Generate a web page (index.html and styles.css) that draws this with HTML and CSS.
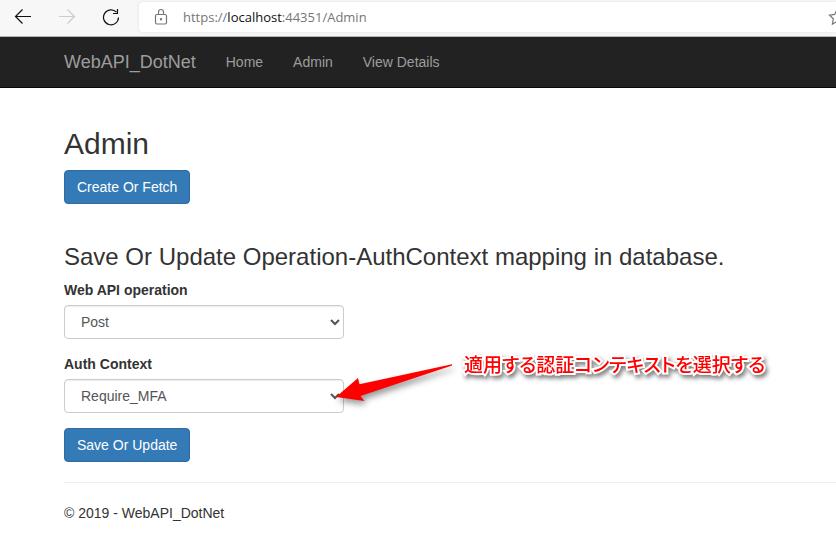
FILE: index.html
```html
<!DOCTYPE html>
<html lang="en">
<head>
<meta charset="utf-8">
<title>Admin - WebAPI_DotNet</title>
<link rel="stylesheet" href="styles.css">
</head>
<body>
<div class="toolbar">
  <div class="tools">
    <button class="tool" type="button" aria-label="Back">
      <svg width="18" height="18" viewBox="0 0 18 18"><path d="M17 8.500H1.500M8.500 1.500L1.500 8.500l7 7"/></svg>
    </button>
    <button class="tool" type="button" aria-label="Forward" disabled>
      <svg width="18" height="18" viewBox="0 0 18 18"><path d="M1 8.500h15.500M9.500 1.500l7 7-7 7"/></svg>
    </button>
    <button class="tool" type="button" aria-label="Refresh">
      <svg width="18" height="18" viewBox="0 0 18 18"><path d="M16.500 9.500A7.500 7.500 0 1 1 14.500 4.200M15.500 1v4.500H11"/></svg>
    </button>
  </div>
  <div class="address">
    <svg class="lock" width="14" height="18" viewBox="0 0 14 18"><rect x="1.500" y="6.500" width="11" height="9.500" rx="1.500"/><path d="M4.500 6.500V4a2.500 2.500 0 0 1 5 0v2.500"/><circle cx="7" cy="11.300" r=".6"/></svg>
    <span class="url">https://<span class="host">localhost</span>:44351/Admin</span>
    <svg class="star" width="18" height="18" viewBox="0 0 18 18"><path d="M9 1.500l2.300 4.900 5.200.7-3.800 3.700.9 5.300L9 13.600l-4.600 2.500.9-5.300L1.500 7.100l5.200-.7z"/></svg>
  </div>
</div>
<nav class="navbar">
  <a class="brand" href="#">WebAPI_DotNet</a>
  <a class="nav-link" href="#">Home</a>
  <a class="nav-link" href="#">Admin</a>
  <a class="nav-link" href="#">View Details</a>
</nav>
<main class="content">
  <h2 class="title">Admin</h2>
  <button class="btn" type="button">Create Or Fetch</button>
  <h3 class="subtitle">Save Or Update Operation-AuthContext mapping in database.</h3>
  <form>
    <div class="field">
      <label for="operation">Web API operation</label>
      <select id="operation"><option>Post</option></select>
    </div>
    <div class="field">
      <label for="context">Auth Context</label>
      <select id="context"><option>Require_MFA</option></select>
      <div class="callout">
        <svg class="arrow" width="124" height="52" viewBox="0 0 124 52"><path d="M4 33L26 14l1.500 6.300L120 .3v1.200L28.500 32l4 5z"/></svg>
        <span class="note" lang="ja">適用する認証コンテキストを選択する</span>
      </div>
    </div>
    <button class="btn" type="button">Save Or Update</button>
  </form>
  <hr>
  <footer>© 2019 - WebAPI_DotNet</footer>
</main>
</body>
</html>
```
FILE: styles.css
```css
* {
  box-sizing: border-box;
}

body {
  margin: 0;
  overflow-x: hidden;
  background: #fff;
  color: #333;
  font: 14px/20px "Liberation Sans", Arial, sans-serif;
}

.toolbar {
  display: flex;
  height: 37px;
  padding: 2px 0 4px 14px;
  background: #f7f7f7;
  border-bottom: 1px solid #b5b5b5;
}

.tools {
  display: flex;
  align-items: center;
  gap: 26px;
  margin-right: 19px;
}

.tool {
  display: flex;
  padding: 0;
  border: 0;
  background: none;
  color: #111;
}

.tool:disabled {
  color: #ccc;
}

.toolbar svg {
  flex: none;
  fill: none;
  stroke: currentColor;
  stroke-width: 1.2;
}

.address {
  display: flex;
  flex: 1;
  align-items: center;
  min-width: 0;
  padding-left: 15px;
  background: #fff;
  border-radius: 4px 0 0 4px;
  box-shadow: 0 0 3px #ddd;
  color: #767676;
}

.url {
  flex: 1;
  margin-left: 15px;
  font: 13px/20px "Open Sans", sans-serif;
}

.host {
  color: #111;
}

.star {
  margin-right: -10px;
}

.navbar {
  display: flex;
  align-items: center;
  height: 51px;
  padding-left: 64px;
  background: #222;
  border-bottom: 1px solid #080808;
}

.brand,
.nav-link {
  color: #9d9d9d;
  text-decoration: none;
}

.brand {
  margin-right: 15px;
  font-size: 18px;
}

.nav-link {
  padding: 15px;
}

.content {
  padding: 39px 0 20px 64px;
}

.title,
.subtitle {
  margin: 0 0 10px;
  font-weight: 400;
}

.title {
  font-size: 30px;
  line-height: 33px;
}

.subtitle {
  margin-top: 40px;
  font-size: 24px;
  line-height: 26px;
}

.btn {
  display: block;
  padding: 6px 12px;
  background: #337ab7;
  border: 1px solid #2e6da4;
  border-radius: 4px;
  color: #fff;
  font: inherit;
}

.field {
  position: relative;
  width: 280px;
  margin-bottom: 15px;
}

label {
  display: block;
  margin-bottom: 5px;
  font-weight: 700;
}

select {
  display: block;
  width: 100%;
  height: 34px;
  padding: 6px 12px;
  background: #fff;
  border: 1px solid #ccc;
  border-radius: 4px;
  box-shadow: inset 0 1px 1px rgba(0, 0, 0, .075);
  color: #555;
  font: inherit;
}

.callout {
  position: absolute;
  top: 10px;
  left: 268px;
  display: flex;
  gap: 8px;
  pointer-events: none;
}

.arrow {
  flex: none;
  overflow: visible;
  fill: #f00;
  filter: drop-shadow(2px 4px 3px rgba(0, 0, 0, .4));
}

.note {
  margin-top: -16px;
  color: #f00;
  font: 500 19px/32px "Noto Sans CJK JP", sans-serif;
  font-feature-settings: "palt";
  white-space: nowrap;
  -webkit-text-stroke: 4px #fff;
  paint-order: stroke fill;
  filter: drop-shadow(2px 3px 2px rgba(0, 0, 0, .5));
}

hr {
  margin: 20px 0;
  border: 0;
  border-top: 1px solid #eee;
}
```
